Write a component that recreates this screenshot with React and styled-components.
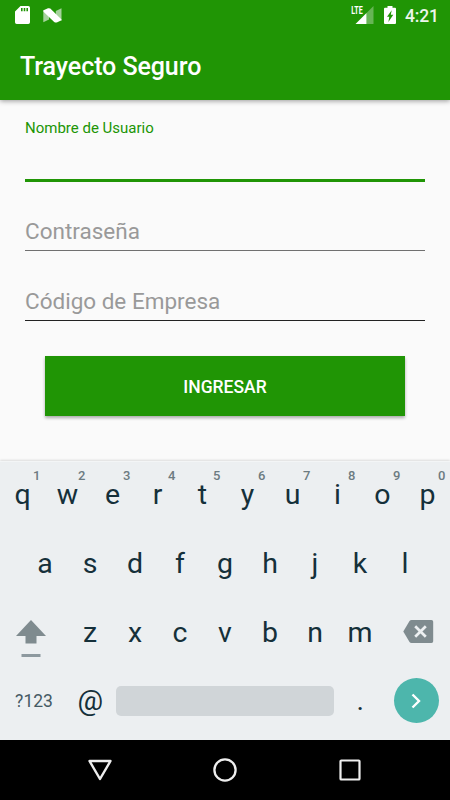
import styled, { createGlobalStyle } from "styled-components";

const GlobalStyle = createGlobalStyle`
    * {
        box-sizing: border-box;
    }
    body {
        margin: 0;
        font-family: Roboto, "Liberation Sans", sans-serif;
    }
`;

const Screen = styled.div`
    width: 450px;
    height: 800px;
    display: flex;
    flex-direction: column;
    overflow: hidden;
    background-color: #fafafa;
`;

const Header = styled.header`
    position: relative;
    height: 100px;
    flex: none;
    background-color: #209505;
    color: white;
    box-shadow: 0 1px 5px rgba(0, 0, 0, 0.4);
`;

const StatusBar = styled.div`
    height: 30px;
    padding: 0 10px 0 15px;
    display: flex;
    justify-content: space-between;
    align-items: center;
`;

const StatusGroup = styled.div`
    display: flex;
    align-items: center;
    gap: ${(props) => props.$gap}px;
`;

const Clock = styled.span`
    width: 35px;
    margin-left: -1px;
    padding-top: 2px;
    font-weight: 500;
    font-size: 17.5px;
    line-height: 28px;
    letter-spacing: -0.2px;
    white-space: nowrap;
    color: #edf6eb;
`;

const Title = styled.h1`
    margin: 0;
    padding-left: 20px;
    font-weight: 500;
    font-size: 25px;
    line-height: 74px;
    letter-spacing: -0.07px;
`;

const Form = styled.form`
    height: 361px;
    flex: none;
    display: flex;
    flex-direction: column;
    padding: 0 25px;
`;

const Field = styled.label`
    height: ${(props) => props.$height}px;
    display: flex;
    flex-direction: column;
    justify-content: ${(props) => (props.$active ? "flex-start" : "flex-end")};
    padding: ${(props) => (props.$active ? "18px 0 0" : "0 0 7px")};
    font-size: ${(props) => (props.$active ? 15 : 22.5)}px;
    line-height: ${(props) => (props.$active ? 20 : 24)}px;
    color: ${(props) => (props.$active ? "#209505" : "#999")};
    border-bottom: ${(props) => props.$line};
`;

const SubmitButton = styled.button`
    height: 60px;
    margin: 35px 20px 0;
    padding: 2px 0 0;
    border: none;
    background-color: #209505;
    color: white;
    font-family: inherit;
    font-weight: 500;
    font-size: 17.5px;
    box-shadow: 0 2px 3px rgba(0, 0, 0, 0.32);
`;

const Keyboard = styled.div`
    height: 279px;
    flex: none;
    border-top: 1px solid #f3f5f6;
    background-color: #eceff1;
    box-shadow: 0 -1px 2px rgba(0, 0, 0, 0.12);
    color: #15303a;
`;

const KeyRow = styled.div`
    height: ${(props) => (props.$first ? 67.5 : 68.5)}px;
    padding-bottom: ${(props) => (props.$first ? 2 : 0)}px;
    display: flex;
    justify-content: center;
    align-items: center;
`;

const Key = styled.div`
    position: relative;
    width: ${(props) => props.$width || 45}px;
    height: 100%;
    display: flex;
    justify-content: center;
    align-items: center;
    padding: ${(props) => props.$padding || 0};
    font-size: ${(props) => props.$size || 28.5}px;
    color: ${(props) => props.$color || "inherit"};
`;

const KeyHint = styled.span`
    position: absolute;
    top: 6px;
    right: 4.6px;
    font-weight: 500;
    font-size: 13px;
    line-height: 16px;
    color: #6d7b81;
`;

const SpaceBar = styled.div`
    width: 218px;
    height: 30px;
    margin: 0 4px 0 3px;
    border-radius: 5px;
    background-color: #d0d5d8;
`;

const EnterKey = styled.div`
    width: 45px;
    height: 45px;
    margin: 0 11px;
    display: flex;
    justify-content: center;
    align-items: center;
    border-radius: 50%;
    background-color: #4db6ac;
`;

const NavBar = styled.nav`
    height: 60px;
    flex: none;
    padding: 0 37.5px;
    display: flex;
    background-color: black;
`;

const NavItem = styled.div`
    flex: 1;
    display: flex;
    justify-content: center;
    align-items: center;
`;

const SdCardIcon = () => (
    <svg width="15" height="18" viewBox="0 0 15 18">
        <path
            fill="white"
            fillRule="evenodd"
            d="M5.5 0H13.3Q15 0 15 1.7V16.3Q15 18 13.3 18H1.7Q0 18 0 16.3V5.5ZM6 2V5.3H7.6V2ZM8.7 2V5.3H10.3V2ZM11.4 2V5.3H13V2Z"
        />
    </svg>
);

const NougatIcon = () => (
    <svg width="19" height="15" viewBox="0 0 19 15">
        <path fill="#a5d29b" d="M0.3 2V14.3L6 11.5V5.8ZM18.5 0.3L12.8 3V9L18.5 12.8Z" />
        <path fill="white" d="M0.5 2.3L5 0.3Q6.2 -0.1 7.3 0.6L18.5 11.4V12.3L14.3 14.2Q12.6 14.8 11.2 13.9L0.5 3.8Z" />
    </svg>
);

const SignalIcon = () => (
    <svg width="23" height="20" viewBox="0 0 23 20">
        <path fill="#67b555" d="M22.5 1V19H15.5V8Z" />
        <path fill="white" d="M15.5 8V19H4.5Z" />
        <text x="0.3" y="9" fill="white" fontSize="11" fontWeight="700" textLength="11.5" lengthAdjust="spacingAndGlyphs">
            LTE
        </text>
    </svg>
);

const BatteryIcon = () => (
    <svg width="12" height="18" viewBox="0 0 12 18">
        <path
            fill="white"
            fillRule="evenodd"
            d="M3.5 0H8.5V1.8H11Q12 1.8 12 2.8V17Q12 18 11 18H1Q0 18 0 17V2.8Q0 1.8 1 1.8H3.5ZM7.7 4.3L3 10.7H5.3L4.4 16L9.3 8.8H6.8Z"
        />
    </svg>
);

const ShiftIcon = () => (
    <svg width="30" height="38" viewBox="0 0 30 38">
        <path fill="#7f8b8f" d="M15 0L30 16H20.5V23.5H9.5V16H0Z" />
        <path fill="#8d999f" d="M5.5 34H24.5V37H5.5Z" />
    </svg>
);

const BackspaceIcon = () => (
    <svg width="31" height="23" viewBox="0 0 31 23">
        <path fill="#7f8b8f" d="M8.5 0H28.5Q30.2 0 30.2 1.7V21.3Q30.2 23 28.5 23H8.5Q7.3 23 6.5 22L0.3 11.5L6.5 1Q7.3 0 8.5 0Z" />
        <path stroke="#eceff1" strokeWidth="2.7" d="M12.2 6.2L22.8 16.8M22.8 6.2L12.2 16.8" />
    </svg>
);

const topRow = "qwertyuiop".split("");
const middleRow = "asdfghjkl".split("");
const bottomRow = "zxcvbnm".split("");

const App = () => {
    return <Screen>
        <GlobalStyle />
        <Header>
            <StatusBar>
                <StatusGroup $gap={13}>
                    <SdCardIcon />
                    <NougatIcon />
                </StatusGroup>
                <StatusGroup $gap={10}>
                    <SignalIcon />
                    <BatteryIcon />
                    <Clock>4:21</Clock>
                </StatusGroup>
            </StatusBar>
            <Title>Trayecto Seguro</Title>
        </Header>
        <Form>
            <Field $active $height={82} $line="3px solid #209505">Nombre de Usuario</Field>
            <Field as="div" $height={69} $line="1px solid #707070">Contraseña</Field>
            <Field as="div" $height={70} $line="1px solid #222">Código de Empresa</Field>
            <SubmitButton type="button">INGRESAR</SubmitButton>
        </Form>
        <Keyboard>
            <KeyRow $first>
                {topRow.map((letter, i) => (
                    <Key key={letter}>
                        {letter}
                        <KeyHint>{(i + 1) % 10}</KeyHint>
                    </Key>
                ))}
            </KeyRow>
            <KeyRow>
                {middleRow.map((letter) => <Key key={letter}>{letter}</Key>)}
            </KeyRow>
            <KeyRow>
                <Key $width={67.5} $padding="13.5px 5px 0 0"><ShiftIcon /></Key>
                {bottomRow.map((letter) => <Key key={letter}>{letter}</Key>)}
                <Key $width={67.5} $padding="0 0 1.5px 5px"><BackspaceIcon /></Key>
            </KeyRow>
            <KeyRow>
                <Key $width={67.5} $size={17.5} $color="#455a64">?123</Key>
                <Key>@</Key>
                <SpaceBar />
                <Key>.</Key>
                <EnterKey>
                    <svg width="12" height="16" viewBox="0 0 12 16">
                        <path fill="none" stroke="white" strokeWidth="2.4" d="M2.5 1.5L9 8L2.5 14.5" />
                    </svg>
                </EnterKey>
            </KeyRow>
        </Keyboard>
        <NavBar>
            <NavItem>
                <svg width="26" height="22" viewBox="0 0 26 22">
                    <path fill="none" stroke="#eee" strokeWidth="2.4" strokeLinejoin="round" d="M2.5 2H23.5L13 20Z" />
                </svg>
            </NavItem>
            <NavItem>
                <svg width="24" height="24" viewBox="0 0 24 24">
                    <circle cx="12" cy="12" r="10.6" fill="none" stroke="#eee" strokeWidth="2.3" />
                </svg>
            </NavItem>
            <NavItem>
                <svg width="22" height="22" viewBox="0 0 22 22">
                    <rect x="1.5" y="1.5" width="19" height="19" rx="0.8" fill="none" stroke="#eee" strokeWidth="2.2" />
                </svg>
            </NavItem>
        </NavBar>
    </Screen>
}

export default App;
